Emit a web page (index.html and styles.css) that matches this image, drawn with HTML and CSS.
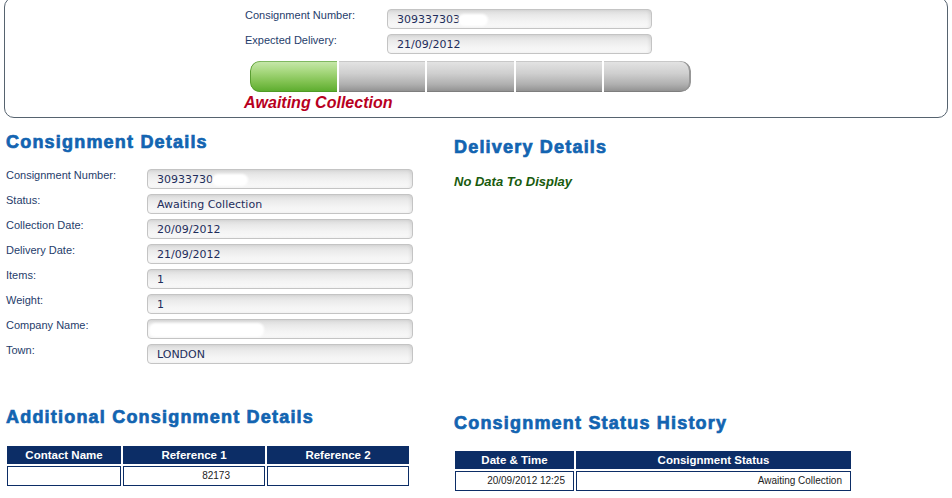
FILE: index.html
```html
<!DOCTYPE html>
<html>
<head>
<meta charset="utf-8">
<title>Consignment Tracking</title>
<link rel="stylesheet" href="styles.css">
</head>
<body>
<div class="summary">
  <div class="summary-inner">
    <div class="row">
      <div class="label top-label">Consignment Number:</div>
      <div class="field top-field">309337303<span class="blot b-top"></span></div>
    </div>
    <div class="row">
      <div class="label top-label">Expected Delivery:</div>
      <div class="field top-field">21/09/2012</div>
    </div>
    <div class="progress">
      <div class="seg done"></div>
      <div class="seg"></div>
      <div class="seg"></div>
      <div class="seg"></div>
      <div class="seg"></div>
    </div>
    <div class="status-text">Awaiting Collection</div>
  </div>
</div>

<div class="main">
  <section class="col left">
    <h2 class="heading">Consignment Details</h2>
    <div class="rows">
      <div class="row"><div class="label">Consignment Number:</div><div class="field">30933730<span class="blot b-left"></span></div></div>
      <div class="row"><div class="label">Status:</div><div class="field">Awaiting Collection</div></div>
      <div class="row"><div class="label">Collection Date:</div><div class="field">20/09/2012</div></div>
      <div class="row"><div class="label">Delivery Date:</div><div class="field">21/09/2012</div></div>
      <div class="row"><div class="label">Items:</div><div class="field">1</div></div>
      <div class="row"><div class="label">Weight:</div><div class="field">1</div></div>
      <div class="row"><div class="label">Company Name:</div><div class="field field-blank"><span class="blot b-company"></span></div></div>
      <div class="row"><div class="label">Town:</div><div class="field">LONDON</div></div>
    </div>
  </section>
  <section class="col right">
    <h2 class="heading">Delivery Details</h2>
    <div class="nodata">No Data To Display</div>
  </section>

  <section class="col left bottom">
    <h2 class="heading">Additional Consignment Details</h2>
    <table class="grid grid-add">
      <thead>
        <tr><th class="c-contact">Contact Name</th><th class="c-ref">Reference 1</th><th class="c-ref">Reference 2</th></tr>
      </thead>
      <tbody>
        <tr><td></td><td class="ref-val">82173</td><td></td></tr>
      </tbody>
    </table>
  </section>
  <section class="col right bottom">
    <h2 class="heading">Consignment Status History</h2>
    <table class="grid grid-hist">
      <thead>
        <tr><th class="c-date">Date &amp; Time</th><th class="c-status">Consignment Status</th></tr>
      </thead>
      <tbody>
        <tr><td>20/09/2012 12:25</td><td>Awaiting Collection</td></tr>
      </tbody>
    </table>
  </section>
</div>
</body>
</html>
```

FILE: styles.css
```css
html, body {
  margin: 0;
  padding: 0;
  background: #ffffff;
}

body {
  font-family: "Liberation Sans", Arial, Helvetica, sans-serif;
  color: #203f6f;
}

/* ---------- summary box ---------- */
.summary {
  margin: -3px 4px 0 4px;
  border: 1px solid #56636f;
  border-radius: 10px;
  height: 121px;
  box-sizing: border-box;
}

.summary-inner {
  padding: 11px 0 0 240px;
}

.row {
  display: flex;
  align-items: flex-start;
  height: 20px;
  margin-bottom: 5px;
}

.label {
  font-size: 11px;
  line-height: 13px;
  color: #1f3d6b;
  width: 141px;
  flex: none;
}

.top-label {
  width: 142px;
}

.field {
  box-sizing: border-box;
  height: 20px;
  width: 266px;
  border: 1px solid #c4c4c4;
  border-radius: 4px;
  background: linear-gradient(to bottom, #dadada 0%, #eaeaea 30%, #f4f4f4 65%, #f9f9f9 100%);
  box-shadow: inset -2px 0 3px rgba(0, 0, 0, 0.06);
  font-family: "DejaVu Sans", Verdana, sans-serif;
  font-size: 11px;
  line-height: 19px;
  padding-left: 9px;
  color: #1e2d5c;
  white-space: nowrap;
  overflow: hidden;
}

.top-field {
  width: 265px;
}

.blot {
  display: inline-block;
  vertical-align: middle;
  height: 12px;
  background: #ffffff;
  border-radius: 6px;
  filter: blur(1px);
}

.b-top { width: 30px; margin-left: -2px; }
.b-left { width: 36px; margin-left: -1px; }
.b-company { width: 115px; margin-left: -8px; height: 14px; }

/* progress bar */
.progress {
  display: flex;
  gap: 2px;
  width: 441px;
  height: 31px;
  margin: 7px 0 0 5px;
  border-radius: 10px;
  overflow: hidden;
  background: #ffffff;
}

.seg {
  flex: 1;
  background: linear-gradient(to bottom, #e4e4e4 0%, #cfcfcf 40%, #b0b0b0 75%, #8e8e8e 100%);
  box-shadow: inset 0 -1px 0 rgba(0, 0, 0, 0.12), inset 0 1px 0 #c8c8c8;
}

.seg:last-child {
  box-shadow: inset -2px 0 0 #979797, inset 0 -1px 0 rgba(0, 0, 0, 0.12), inset 0 1px 0 #c8c8c8;
  border-radius: 0 10px 10px 0;
}

.seg.done {
  background: linear-gradient(to bottom, #c9e8ad 0%, #a5d77c 35%, #7ec04e 70%, #5aab2c 100%);
  box-shadow: inset 1px 0 0 #5a9e33, inset 0 1px 0 #7fb860, inset 0 -1px 0 #4f9a25;
  border-radius: 10px 0 0 10px;
}

.status-text {
  font-size: 16px;
  line-height: 18px;
  font-weight: bold;
  font-style: italic;
  color: #b8001e;
  margin-top: 2px;
  margin-left: -1px;
}

/* ---------- main content ---------- */
.main {
  display: grid;
  grid-template-columns: 448px 1fr;
  padding-left: 6px;
}

.heading {
  margin: 0;
  font-size: 18px;
  line-height: 22px;
  font-weight: bold;
  letter-spacing: 1.2px;
  color: #1264b1;
  -webkit-text-stroke: 0.7px #1264b1;
}

.col.left {
  padding-top: 13px;
}

.col.right {
  padding-top: 18px;
}

.rows {
  margin-top: 16px;
}

.nodata {
  margin-top: 16px;
  font-size: 13px;
  line-height: 15px;
  font-weight: bold;
  font-style: italic;
  color: #195b0e;
}

.col.left.bottom {
  padding-top: 37px;
}

.col.right.bottom {
  padding-top: 43px;
}

/* ---------- tables ---------- */
.grid {
  border-collapse: separate;
  border-spacing: 2px;
  margin-left: -1px;
}

.grid-add {
  margin-top: 16px;
}

.grid-hist {
  margin-top: 15px;
}

.grid th {
  background: #0c2d66;
  color: #ffffff;
  font-size: 11.5px;
  font-weight: bold;
  height: 18px;
  padding: 0;
  text-align: center;
  line-height: 18px;
  box-sizing: border-box;
}

.grid td {
  box-sizing: border-box;
  height: 20px;
  border: 1px solid #0c2d66;
  padding: 0 8px 0 0;
  font-size: 10px;
  color: #222222;
  text-align: right;
  line-height: 18px;
}

.c-contact { width: 114px; }
.c-ref { width: 142px; }
.ref-val { padding-right: 34px !important; }

.c-date { width: 119px; }
.c-status { width: 275px; }
```
